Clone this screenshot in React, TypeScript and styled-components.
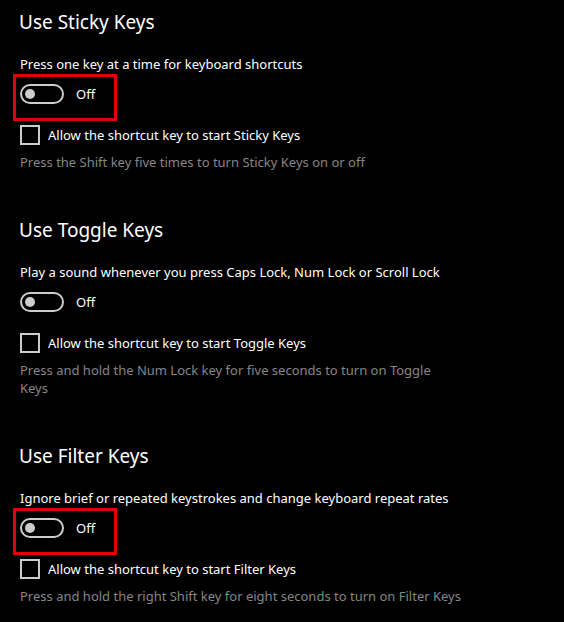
import styled, { createGlobalStyle } from 'styled-components';

interface Section {
	title: string;
	description: string;
	checkbox: string;
	hint: string;
	highlight: boolean;
}

const sections: Section[] = [
	{
		title: 'Use Sticky Keys',
		description: 'Press one key at a time for keyboard shortcuts',
		checkbox: 'Allow the shortcut key to start Sticky Keys',
		hint: 'Press the Shift key five times to turn Sticky Keys on or off',
		highlight: true,
	},
	{
		title: 'Use Toggle Keys',
		description: 'Play a sound whenever you press Caps Lock, Num Lock or Scroll Lock',
		checkbox: 'Allow the shortcut key to start Toggle Keys',
		hint: 'Press and hold the Num Lock key for five seconds to turn on Toggle Keys',
		highlight: false,
	},
	{
		title: 'Use Filter Keys',
		description: 'Ignore brief or repeated keystrokes and change keyboard repeat rates',
		checkbox: 'Allow the shortcut key to start Filter Keys',
		hint: 'Press and hold the right Shift key for eight seconds to turn on Filter Keys',
		highlight: true,
	},
];

export default function App() {
	return (
		<>
			<GlobalStyle />
			<Page>
				{sections.map(s => (
					<Group key={s.title}>
						<Heading>{s.title}</Heading>
						<Description>{s.description}</Description>
						<ToggleRow highlight={s.highlight}>
							<Switch>
								<Knob />
							</Switch>
							<SwitchLabel>Off</SwitchLabel>
						</ToggleRow>
						<CheckRow>
							<Box />
							<span>{s.checkbox}</span>
						</CheckRow>
						<Hint>{s.hint}</Hint>
					</Group>
				))}
			</Page>
		</>
	);
}

const GlobalStyle = createGlobalStyle`
	html, body {
		margin: 0;
		background: #000;
	}
	body {
		font-family: 'Noto Sans', 'Open Sans', sans-serif;
		color: #fff;
	}
`;

const Page = styled.div`
	width: 564px;
	height: 622px;
	overflow: hidden;
	padding: 10px 20px 0;
	box-sizing: border-box;
	display: flex;
	flex-direction: column;
	gap: 47px;
`;

const Group = styled.div`
	display: flex;
	flex-direction: column;
	align-items: flex-start;
`;

const Heading = styled.h2`
	margin: 0 0 0 -1px;
	font-size: 19px;
	font-weight: 400;
	line-height: 24px;
`;

const Description = styled.div`
	margin-top: 20px;
	font-size: 13px;
	line-height: 20px;
`;

const ToggleRow = styled.div<{ highlight: boolean }>`
	margin: 0 0 0 -7px;
	padding: 7px 19px 14px 4px;
	display: flex;
	align-items: center;
	gap: 12px;
	border: 3px solid ${p => (p.highlight ? '#e0000b' : 'transparent')};
`;

const Switch = styled.div`
	width: 44px;
	height: 20px;
	box-sizing: border-box;
	border: 2px solid #cccccc;
	border-radius: 10px;
	display: flex;
	align-items: center;
	padding-left: 3px;
`;

const Knob = styled.div`
	width: 10px;
	height: 10px;
	border-radius: 50%;
	background: #cccccc;
`;

const SwitchLabel = styled.span`
	font-size: 13px;
`;

const CheckRow = styled.div`
	margin-top: 4px;
	display: flex;
	align-items: center;
	gap: 8px;
	font-size: 13px;
`;

const Box = styled.div`
	width: 20px;
	height: 20px;
	box-sizing: border-box;
	border: 2px solid #cccccc;
`;

const Hint = styled.div`
	margin-top: 8px;
	max-width: 441px;
	font-size: 13px;
	line-height: 18px;
	color: #868686;
`;
